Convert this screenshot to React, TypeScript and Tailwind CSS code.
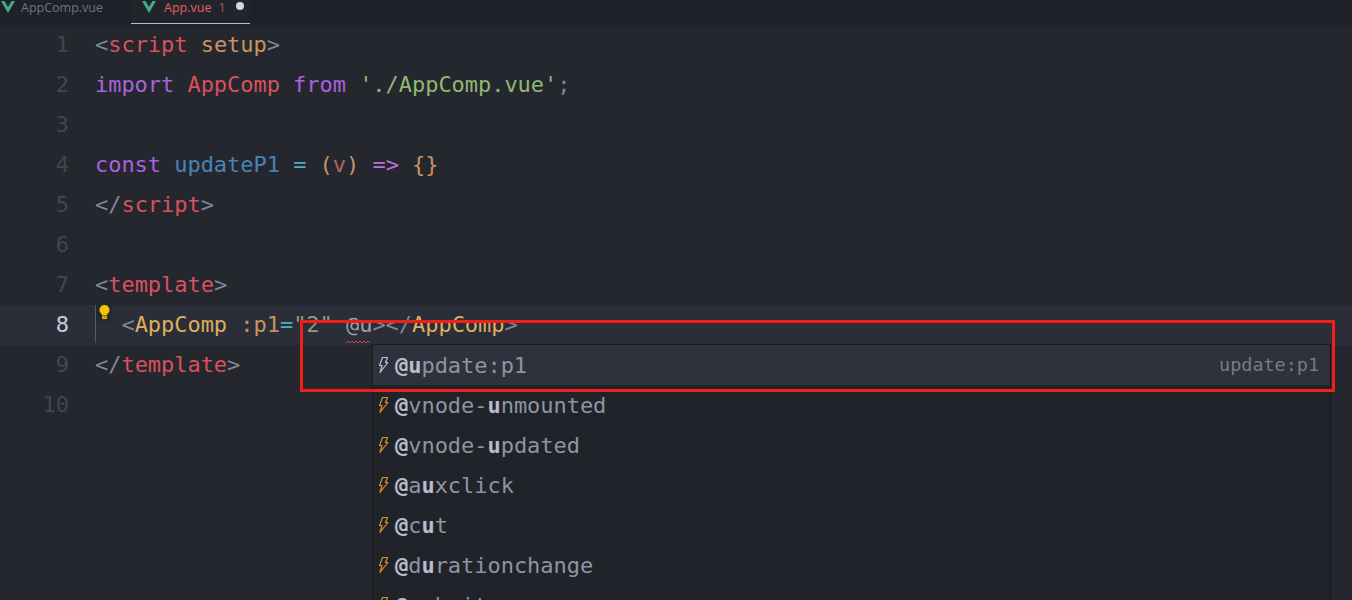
import React from "react";

type Seg = [string, string];
const mono = "font-['DejaVu_Sans_Mono','Liberation_Mono',monospace]";

const P = "text-[#7f8696]";
const R = "text-[#d8525c]";
const O = "text-[#c9935f]";
const V = "text-[#a962dc]";
const G = "text-[#8fb873]";
const B = "text-[#4684b8]";
const M = "text-[#bd70d4]";
const Y = "text-[#dcae60]";

const lines: Seg[][] = [
  [["<", P], ["script", R], [" ", P], ["setup", O], [">", P]],
  [["import", V], [" ", P], ["AppComp", R], [" ", P], ["from", V], [" ", P], ["'./AppComp.vue'", G], [";", P]],
  [],
  [["const", V], [" ", P], ["updateP1", B], [" ", P], ["=", "text-[#52adb9]"], [" ", P], ["(", O], ["v", "text-[#a86a55]"], [")", O], [" ", P], ["=>", M], [" ", P], ["{}", O]],
  [["</", P], ["script", R], [">", P]],
  [],
  [["<", P], ["template", R], [">", P]],
  [["  <", P], ["AppComp", Y], [" ", P], [":p1", O], ["=", "text-[#52adb9]"], ["\"2\"", "text-[#98987f]"], [" ", P], ["@u", "text-[#98a0ae]"], ["></", P], ["AppComp", Y], [">", P]],
  [["</", P], ["template", R], [">", P]],
  [],
];

function Bolt({ active }: { active?: boolean }) {
  return (
    <svg width="11" height="18" viewBox="0 0 11 18" fill="none" stroke={active ? "#b9c6dc" : "#d8922c"} strokeWidth="1.2" strokeLinejoin="round">
      <path d="M4.500 1.500h5L7.500 6.500h2.300L2 16.500 4 9.500H1.500Z" />
    </svg>
  );
}

const suggestions: [string, boolean][][] = [
  [["@u", true], ["pdate:p1", false]],
  [["@", true], ["vnode-", false], ["u", true], ["nmounted", false]],
  [["@", true], ["vnode-", false], ["u", true], ["pdated", false]],
  [["@", true], ["a", false], ["u", true], ["xclick", false]],
  [["@", true], ["c", false], ["u", true], ["t", false]],
  [["@", true], ["d", false], ["u", true], ["rationchange", false]],
  [["@", true], ["s", false], ["u", true], ["bmit", false]],
];

export default function App() {
  return (
    <div className={`relative h-[600px] w-[1352px] overflow-hidden bg-[#25272f] ${mono} text-[22px] tracking-[-0.04px]`}>
      <div className="flex h-[25px] bg-[#1f2128] font-['Open_Sans',sans-serif] text-[12.500px] leading-[16px] tracking-normal">
        <div className="flex w-[131px] items-start gap-[6px] pl-[1px]">
          <VueIcon />
          <span className="text-[#70757f]">AppComp.vue</span>
        </div>
        <div className="flex h-[24px] w-[119px] items-start border-b border-[#b9bdc6] bg-[#22242b] pl-[11px]">
          <VueIcon />
          <span className="ml-[8px] text-[#e4605a]">App.vue</span>
          <span className="ml-[7px] text-[#a85a62]">1</span>
          <span className="ml-[10px] mt-[2px] h-[8px] w-[8px] rounded-full bg-[#d5d9e3]" />
        </div>
      </div>

      <div>
        {lines.map((segs, i) => (
          <div key={i} className={`flex h-[40px] items-center leading-[40px] ${i === 7 ? "bg-[#2b2e38]" : ""}`}>
            <div className={`w-[70px] pr-px text-right ${i === 7 ? "text-[#c8ccd6]" : "text-[#424651]"}`}>{i + 1}</div>
            <div className="ml-[25px] whitespace-pre">
              {segs.map(([t, c], j) => (
                <span key={j} className={c}>{t}</span>
              ))}
            </div>
          </div>
        ))}
      </div>

      <div className="absolute left-[95px] top-[305px] h-[38px] w-px bg-[#565a66]" />
      <div className="absolute left-[96px] top-[304px] flex h-[17px] w-[16px] justify-center bg-[#262830] pt-px">
        <svg width="11" height="15" viewBox="0 0 11 15">
          <path d="M5.500 0a5 5 0 0 0-3 9c.5.4.7.9.7 1.500h4.600c0-.6.2-1.100.7-1.500a5 5 0 0 0-3-9Z" fill="#f5c400" />
          <path d="M3.200 11h4.600v3H3.200Z" fill="#f5c400" />
          <path d="M4.700 11.500h1.600v1.300H4.700Z" fill="#5a4a10" />
        </svg>
      </div>
      <svg className="absolute left-[346px] top-[340px]" width="27" height="5" viewBox="0 0 27 5" fill="none">
        <path d="M0 3l2-2 2 2 2-2 2 2 2-2 2 2 2-2 2 2 2-2 2 2 2-2 2 2" stroke="#b84a45" strokeWidth="1" />
      </svg>

      <div className="absolute left-[372px] top-[344px] w-[959px] overflow-hidden border-x border-t border-[#191a20] bg-[#21232b]">
        {suggestions.map((s, i) => (
          <div key={i} className={`flex h-[40px] items-center pl-[5px] pr-[11px] ${i === 0 ? "bg-[#2f313d]" : ""}`}>
            <span className="mr-[5px] flex w-[12px]"><Bolt active={i === 0} /></span>
            {s.map(([t, b], j) => (
              <span key={j} className={b ? "font-bold text-[#b9bdca]" : "text-[#8f94a0]"}>{t}</span>
            ))}
            {i === 0 && <span className="ml-auto text-[18.500px] text-[#777b86]">update:p1</span>}
          </div>
        ))}
      </div>

      <div className="absolute left-[300px] top-[320px] h-[72px] w-[1035px] border-[3px] border-[#f02018]" />
    </div>
  );
}

function VueIcon() {
  return (
    <svg width="14" height="12" viewBox="0 0 14 12" className="mt-[1px] shrink-0">
      <path d="M0 0h3.500L7 6l3.500-6H14L7 12Z" fill="#3fae7e" />
    </svg>
  );
}
